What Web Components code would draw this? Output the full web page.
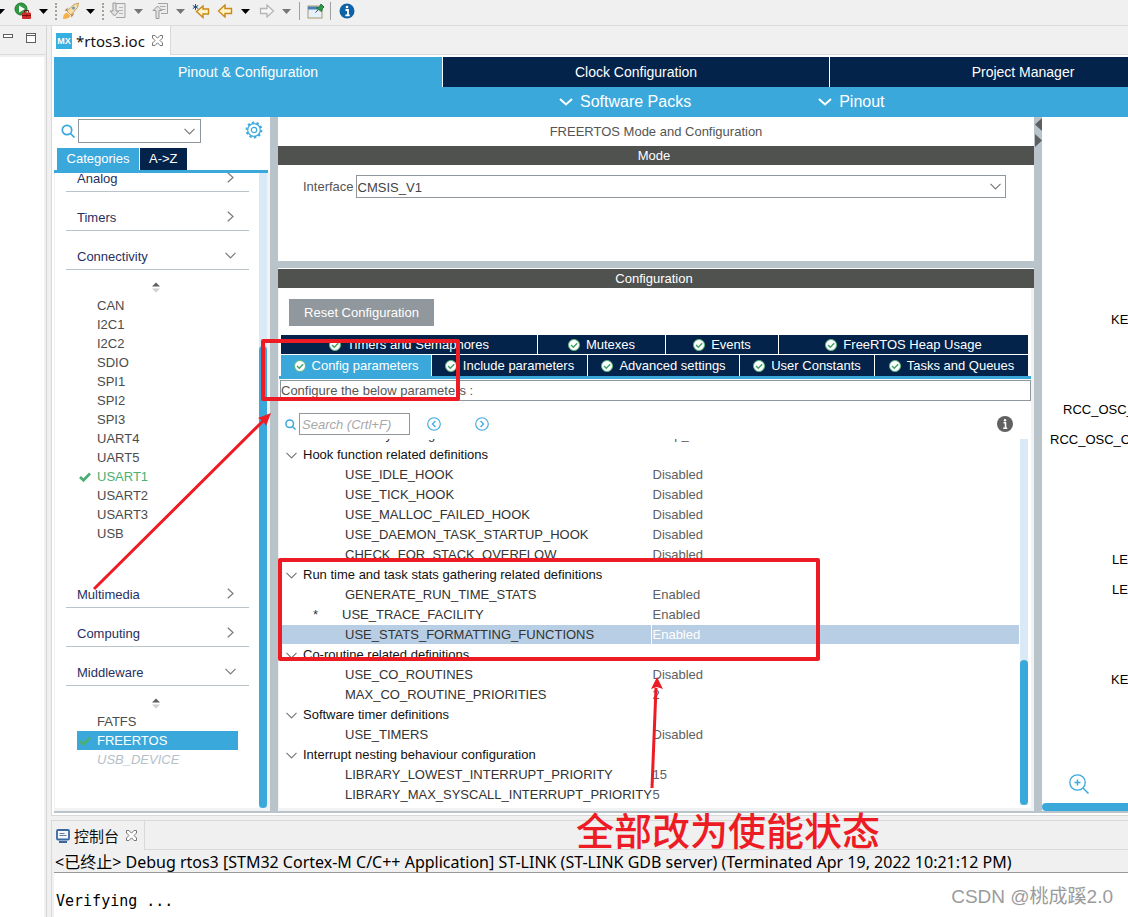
<!DOCTYPE html>
<html lang="zh-CN">
<head>
<meta charset="utf-8">
<title>rtos3.ioc - STM32CubeIDE</title>
<style>
  html, body { margin: 0; height: 100%; }
  body { overflow: hidden; background: #f0f0f0; font: 13px/20px "Liberation Sans", "Noto Sans CJK SC", sans-serif; color: #3c3c3c; }
</style>
</head>
<body>
<ide-shell></ide-shell>

<script>
const define = (name, html) => customElements.define(name, class extends HTMLElement {
  constructor() {
    super();
    this.attachShadow({ mode: 'open' }).innerHTML =
      '<style>*{box-sizing:border-box}:host{display:block;box-sizing:border-box;min-width:0}button,input,select{font:inherit;color:inherit;margin:0;border-radius:0}button{border:0;background:none;padding:0}svg{display:block;flex:none}</style>' +
      (typeof html === 'function' ? html(this) : html);
  }
});

/* ---------- icons ---------- */
const ICONS = {
  run: [18, 18, '<circle cx="7" cy="7" r="6" fill="#2f9a41" stroke="#1c7a33"/><path d="M5 3.5v7l6-3.5z" fill="#fff"/><rect x="8" y="10.500" width="9" height="6.500" rx="1" fill="#d02a2a"/><path d="M10.500 10.500v-2h4v2M8 13.500h9M12.500 12.500v2" stroke="#7c1010" fill="none"/>'],
  rocket: [18, 18, '<path d="M5 9L12 2.500 16.500 1 15.500 5.500 9 13z" fill="#f6dfa6" stroke="#c9a25c"/><path d="M5 9l-2.500-.5L6 5.500zM9 13l.5 2.500L12.500 11z" fill="#b77b45"/><path d="M1 17c0-4 2-6 4-6.500L8.500 14C7.500 16 5 17 1 17z" fill="#f6b04a"/><circle cx="11.500" cy="6" r="1.600" fill="#8299b5"/>'],
  next: [18, 18, '<path d="M6.500 1.500h9.500v14H7" fill="#ececec" stroke="#a3a3a3"/><path d="M10 5.500h4M10 8.500h4M10 11.500h4" stroke="#b5b5b5"/><path d="M4 1h3v8h3l-4.500 5L1 9h3z" fill="#e2e2e2" stroke="#999"/>'],
  prev: [18, 18, '<path d="M6 1.500h9.500v10H9" fill="#ececec" stroke="#a3a3a3"/><path d="M8 4.500h5.500M9 7.500h4.500" stroke="#aaa"/><path d="M4 16.500h3v-8h3L5.500 4 1 8.500h3z" fill="#e2e2e2" stroke="#999"/>'],
  backstar: [18, 16, '<path d="M16.500 6v5h-5.500v3.500L4.500 8.500 11 3v3z" fill="#fff3c4" stroke="#c8891a" stroke-width="1.400"/><path d="M3.500 1v6M.8 2.500l5.400 3M6.200 2.500l-5.400 3" stroke="#24507c"/>'],
  back: [16, 14, '<path d="M14.500 4.500v5H8V13L1.500 7 8 1v3.500z" fill="#fff3c4" stroke="#c8891a" stroke-width="1.400"/>'],
  fwd: [16, 14, '<path d="M1.500 4.500v5H8V13l6.500-6L8 1v3.500z" fill="#f6f6f6" stroke="#b5b5b5" stroke-width="1.300"/>'],
  pin: [18, 16, '<rect x="1" y="3" width="14" height="12" fill="#e4f1fb" stroke="#a89a6c"/><path d="M1 5h10" stroke="#4a7fb5" stroke-width="3"/><path d="M8.500 9.500l3-3" stroke="#444"/><path d="M9.500 5l3-1 1.500-3 3 3-1.500 1.500-1 3z" fill="#2f9a4b" stroke="#1d7436"/>'],
  info: [16, 16, '<circle cx="8" cy="8" r="7.500" fill="#0f62a5"/><path d="M6.500 7H9v5M6.300 12.300h4.400" stroke="#fff" stroke-width="1.800" fill="none"/><circle cx="8" cy="4" r="1.300" fill="#fff"/>'],
  caret: [9, 5, '<path d="M0 0h9L4.500 5z" fill="currentColor"/>'],
  close: [11, 11, '<path d="M.5.5h2.500l2.500 2.700L8 .5h2.500V3L8 5.500 10.500 8v2.500H8L5.500 7.800 3 10.500H.5V8L3 5.500.5 3z" fill="#fff" stroke="#777"/>'],
  minimize: [10, 4, '<rect x=".5" y=".5" width="9" height="3" fill="#fff" stroke="#5f5f5f"/>'],
  maximize: [10, 10, '<rect x=".5" y=".5" width="9" height="9" fill="#fff" stroke="#5f5f5f"/><path d="M0 2.500h10" stroke="#5f5f5f"/>'],
  search: [14, 14, '<circle cx="6" cy="6" r="4.700" fill="none" stroke="#3ba8dc" stroke-width="1.700"/><path d="M9.500 9.500l4 4" stroke="#3ba8dc" stroke-width="1.700"/>'],
  searchsm: [11, 11, '<circle cx="4.700" cy="4.700" r="3.800" fill="none" stroke="#3ba8dc" stroke-width="1.500"/><path d="M7.500 7.500l3 3" stroke="#3ba8dc" stroke-width="1.500"/>'],
  gear: [18, 18, '<circle cx="9" cy="9" r="7.400" fill="none" stroke="#3ba8dc" stroke-width="2" stroke-dasharray="2.325 2.325"/><circle cx="9" cy="9" r="6.300" fill="#fff" stroke="#3ba8dc" stroke-width="1.200"/><circle cx="9" cy="9" r="2.700" fill="none" stroke="#3ba8dc" stroke-width="1.200"/>'],
  down: [11, 7, '<path d="M.5 .8l5 5 5-5" fill="none" stroke="currentColor" stroke-width="1.200"/>'],
  downbold: [14, 8, '<path d="M1 1l6 5.500L13 1" fill="none" stroke="#fff" stroke-width="2"/>'],
  right: [7, 11, '<path d="M.8 .8l5.200 4.700L.8 10.200" fill="none" stroke="currentColor" stroke-width="1.200"/>'],
  sort: [8, 11, '<path d="M0 4.500L4 .5l4 4z" fill="#5f5f5f"/><path d="M0 6.500h8l-4 4z" fill="#cfcfcf"/>'],
  check: [12, 10, '<path d="M1 5l3.500 3.300L11 1.500" fill="none" stroke="#4caf72" stroke-width="2.700"/>'],
  ok: [12, 12, '<circle cx="6" cy="6" r="5.500" fill="#fff" stroke="#5cb77f"/><path d="M3 6l2.300 2.300L9.200 4.300" fill="none" stroke="#3da163" stroke-width="1.400"/>'],
  circleleft: [14, 14, '<circle cx="7" cy="7" r="6.300" fill="none" stroke="#3ba8dc" stroke-width="1.100"/><path d="M8.500 4L5.500 7l3 3" fill="none" stroke="#3ba8dc" stroke-width="1.300"/>'],
  circleright: [14, 14, '<circle cx="7" cy="7" r="6.300" fill="none" stroke="#3ba8dc" stroke-width="1.100"/><path d="M5.500 4l3 3-3 3" fill="none" stroke="#3ba8dc" stroke-width="1.300"/>'],
  help: [16, 16, '<circle cx="8" cy="8" r="8" fill="#616161"/><path d="M6.500 6.800h2V12M6.200 12.300h4" stroke="#fff" stroke-width="1.600" fill="none"/><circle cx="8" cy="4.200" r="1.200" fill="#fff"/>'],
  console: [14, 14, '<rect x="1" y="1" width="12" height="9.500" rx="1" fill="#f4f8fd" stroke="#3c679f" stroke-width="1.800"/><path d="M3.500 4.500h5M3.500 6.500h7" stroke="#657da8"/><path d="M3 13h8" stroke="#3c679f" stroke-width="2"/>'],
  zoomin: [20, 20, '<circle cx="8.500" cy="8.500" r="7.700" fill="none" stroke="#3ba8dc" stroke-width="1.300"/><path d="M14 14l5.500 5.500M5.500 8.500h6M8.500 5.500v6" stroke="#3ba8dc" stroke-width="1.500"/>'],
  collapse: [7, 30, '<path d="M7 1v13L0 7.500z" fill="#5d5f60"/><path d="M0 17v13l7-6.500z" fill="#5d5f60"/>'],
};
const icon = n => { const [w, h, d] = ICONS[n]; return `<svg width="${w}" height="${h}" viewBox="0 0 ${w} ${h}" aria-hidden="true">${d}</svg>`; };

/* ---------- workbench toolbar ---------- */
define('ide-toolbar', () => {
  const b = (n, l, x) => `<button style="margin-left:${x}px" aria-label="${l}">${icon(n)}</button>`;
  const c = (x, off) => `<button class="${off ? 'off' : ''}" style="margin-left:${x}px" aria-label="More">${icon('caret')}</button>`;
  return `<style>
    :host { display: flex; align-items: center; height: 26px; padding-bottom: 3px; overflow: hidden; border-bottom: 1px solid #dcdcdc; color: #000; }
    .off { color: #767676; }
    .dots { width: 0; height: 17px; border-left: 2px dotted #a5a295; }
    .bar { width: 1px; height: 18px; background: #a0a0a0; }
  </style>
  ${c(-4)}${b('run', 'Run', 9)}${c(7)}<i class="dots" style="margin-left:7px"></i>${b('rocket', 'Build', 5)}${c(6)}
  <i class="dots" style="margin-left:7px"></i>${b('next', 'Next annotation', 5)}${c(7, 1)}${b('prev', 'Previous annotation', 9)}${c(6, 1)}
  ${b('backstar', 'Last edit', 7)}${b('back', 'Back', 7)}${c(8)}${b('fwd', 'Forward', 9)}${c(7, 1)}
  <i class="bar" style="margin-left:8px"></i>${b('pin', 'Pin editor', 7)}<i class="bar" style="margin-left:5px"></i>${b('info', 'Information', 8)}`;
});

/* ---------- minimised view column ---------- */
define('ide-side-view', `<style>
    :host { display: flex; flex-direction: column; border-right: 1px solid #d6d6d6; }
    header { display: flex; align-items: center; gap: 13px; height: 29px; padding: 0 0 4px 3px; border-bottom: 1px solid #dcdcdc; }
    header button:first-child { padding-bottom: 5px; }
    .body { flex: 1; margin: 2px 2px 0 0; background: #fff; }
  </style><header><button aria-label="Minimize">${icon('minimize')}</button><button aria-label="Maximize">${icon('maximize')}</button></header><div class="body"></div>`);

/* ---------- tab strip shared by editor and console ---------- */
define('ide-tab-strip', `<style>
    :host { display: flex; flex: none; height: 29px; background: #f0f0f0; border-bottom: 1px solid #d9d9d9; }
    .tab { display: flex; align-items: center; gap: 4px; height: 29px; padding: 0 7px 0 4px; border-right: 1px solid #d9d9d9; background: var(--tab, #f0f0f0); color: #111; font-family: "Noto Sans", "Noto Sans CJK SC", sans-serif; font-size: 15px; }
    button { margin-left: 3px; }
  </style><div class="tab"><slot name="icon"></slot><slot></slot><button aria-label="Close">${icon('close')}</button></div>`);

/* ---------- CubeMX header ---------- */
define('mx-header', `<style>
    :host { overflow: hidden; background: #3ba8dc; color: #fff; }
    nav { display: flex; gap: 1px; background: linear-gradient(90deg, #3ba8dc 388px, #fff 388px); height: 30px; }
    nav button { flex: 1 0 386px; font-size: 14px; background: #03234b; }
    nav button.on { flex-basis: 388px; background: #3ba8dc; }
    .menus { display: flex; gap: 127px; height: 30px; padding-left: 505px; font-size: 16px; }
    .menus button { display: flex; align-items: center; gap: 7px; white-space: nowrap; }
  </style><nav><button class="on">Pinout &amp; Configuration</button><button>Clock Configuration</button><button>Project Manager</button></nav>
  <div class="menus"><button>${icon('downbold')}Software Packs</button><button>${icon('downbold')}Pinout</button></div>`);

/* ---------- scroll bar ---------- */
define('mx-scrollbar', `<style>
    :host { width: 8px; background: #d9e9f5; display: flex; flex-direction: column; }
    i { flex: 1; margin-top: var(--start); border-radius: 4px; background: #3ba8dc; }
  </style><i></i>`);

/* ---------- category tree ---------- */
define('mx-category', el => `<style>
    h3 { margin: 0 10px 0 11px; height: 39px; padding: 14px 12px 0 11px; border-bottom: 1px solid #b9c4ca; font: inherit; color: #27305f; display: flex; justify-content: space-between; line-height: 24px; }
    h3 span { display: flex; width: 13px; justify-content: center; height: 20px; align-items: center; color: #7a7a7a; }
    .list { padding-bottom: var(--end, 26px); }
    .sort { height: 26px; display: flex; justify-content: center; padding: 12px 2px 0 0; }
    ::slotted(*) { margin: 0 21px 0 22px; }
  </style><h3>${el.getAttribute('label')}<span>${icon(el.hasAttribute('open') ? 'down' : 'right')}</span></h3>
  ${el.hasAttribute('open') ? `<div class="list"><div class="sort">${icon('sort')}</div><slot></slot></div>` : ''}`);

define('mx-peripheral', el => `<style>
    :host { display: flex; align-items: center; height: 19px; padding-left: 2px; color: #4b4b4b; }
    :host([enabled]) { color: #4caf72; }
    :host([selected]) { background: #3ba8dc; color: #fff; }
    :host([unavailable]) { color: #b5c1c9; font-style: italic; }
    span { width: 18px; }
  </style><span>${el.hasAttribute('checked') ? icon('check') : ''}</span><slot></slot>`);

define('mx-categories', () => {
  const p = 'CAN,I2C1,I2C2,SDIO,SPI1,SPI2,SPI3,UART4,UART5,USART1,USART2,USART3,USB'.split(',')
    .map(n => `<mx-peripheral ${n === 'USART1' ? 'enabled checked' : ''}>${n}</mx-peripheral>`).join('');
  return `<style>
    :host { display: flex; flex-direction: column; background: #fff; min-height: 0; }
    .find { display: flex; align-items: center; padding: 2px 7px 5px; height: 31px; }
    .find > svg:first-child { margin-right: 3px; }
    .find > button { margin-left: auto; padding-bottom: 2px; }
    .combo { display: flex; width: 123px; height: 24px; border: 1px solid #8f979c; align-items: center; color: #7a7a7a; }
    input { width: 105px; height: 20px; border: 0; outline: 0; padding: 0 4px; }
    .tabs { display: flex; gap: 1px; padding-left: 3px; border-bottom: 3px solid #3ba8dc; margin-right: 2px; }
    .tabs button { height: 22px; padding: 0 9px; background: #03234b; color: #fff; }
    .tabs .on { background: #3ba8dc; width: 82px; }
    .tree { flex: 1; display: flex; min-height: 0; border: solid #f0f2f3; border-width: 0 3px 3px 1px; }
    .scroll { flex: 1; display: flex; flex-direction: column; justify-content: flex-end; overflow: hidden; min-height: 0; }
    mx-category { flex: none; }
    mx-scrollbar { --start: 173px; }
    mx-category:last-child { --end: 39px; }
  </style>
  <div class="find">${icon('search')}<div class="combo"><input aria-label="Search peripherals">${icon('down')}</div><button aria-label="Settings">${icon('gear')}</button></div>
  <div class="tabs"><button class="on">Categories</button><button>A-&gt;Z</button></div>
  <div class="tree"><div class="scroll">
    <mx-category label="Analog"></mx-category><mx-category label="Timers"></mx-category>
    <mx-category label="Connectivity" open>${p}</mx-category>
    <mx-category label="Multimedia"></mx-category><mx-category label="Computing"></mx-category>
    <mx-category label="Middleware" open><mx-peripheral>FATFS</mx-peripheral><mx-peripheral checked selected>FREERTOS</mx-peripheral><mx-peripheral unavailable>USB_DEVICE</mx-peripheral></mx-category>
  </div><mx-scrollbar></mx-scrollbar></div>`;
});

/* ---------- FreeRTOS parameter table ---------- */
define('mx-parameters', () => {
  const rows = [
    ['Memory Management scheme', 'heap_4'],
    ['Hook function related definitions'],
    ['USE_IDLE_HOOK', 'Disabled'], ['USE_TICK_HOOK', 'Disabled'], ['USE_MALLOC_FAILED_HOOK', 'Disabled'],
    ['USE_DAEMON_TASK_STARTUP_HOOK', 'Disabled'], ['CHECK_FOR_STACK_OVERFLOW', 'Disabled'],
    ['Run time and task stats gathering related definitions'],
    ['GENERATE_RUN_TIME_STATS', 'Enabled'], ['USE_TRACE_FACILITY', 'Enabled', 'changed'], ['USE_STATS_FORMATTING_FUNCTIONS', 'Enabled', 'selected'],
    ['Co-routine related definitions'],
    ['USE_CO_ROUTINES', 'Disabled'], ['MAX_CO_ROUTINE_PRIORITIES', '2'],
    ['Software timer definitions'],
    ['USE_TIMERS', 'Disabled'],
    ['Interrupt nesting behaviour configuration'],
    ['LIBRARY_LOWEST_INTERRUPT_PRIORITY', '15'], ['LIBRARY_MAX_SYSCALL_INTERRUPT_PRIORITY', '5'],
  ];
  return `<style>
    :host { display: flex; min-height: 0; }
    .scroll { flex: 1; display: flex; flex-direction: column; justify-content: flex-end; overflow: hidden; }
    table { width: 100%; border-collapse: separate; border-spacing: 0; table-layout: fixed; flex: none; }
    col:first-child { width: 50%; }
    td, th { padding: 0; line-height: 20px; font-weight: 400; text-align: left; white-space: nowrap; height: 20px; }
    td:first-child { padding-left: 63px; color: #333; }
    td + td { padding-left: 2px; color: #606060; }
    th { color: #111; }
    th span { display: flex; align-items: center; gap: 6px; padding-left: 4px; }
    th svg { color: #7a7a7a; }
    .changed td:first-child { padding-left: 31px; }
    .changed b { font-weight: 400; display: inline-block; width: 29px; }
    .selected td { background: #b8cee5; border-bottom: 1px solid #fff; line-height: 19px; }
    .selected td + td { color: #fff; border-left: 1px solid #fff; padding-left: 1px; }
  </style><div class="scroll"><table><colgroup><col><col></colgroup><tbody>${rows.map(([n, v, k]) => v === undefined
    ? `<tr><th colspan="2" scope="rowgroup"><span>${icon('down')}${n}</span></th></tr>`
    : `<tr class="${k || ''}"><td>${k === 'changed' ? '<b>*</b>' : ''}${n}</td><td>${v}</td></tr>`).join('')}</tbody></table></div>`;
});

/* ---------- mode and configuration pane ---------- */
define('mx-config', () => {
  const t = (n, g, on) => `<button class="${on || ''}" style="flex:${g} 0 0">${icon('ok')}${n}</button>`;
  return `<style>
    :host { display: flex; flex-direction: column; min-height: 0; background: #fff; }
    h1 { margin: 0; height: 29px; font: inherit; line-height: 29px; text-align: center; color: #555; }
    h2 { margin: 0; height: 19px; background: #50524f; color: #fff; font: inherit; line-height: 19px; text-align: center; padding-right: 4px; }
    .mode { height: 96px; padding: 10px 28px 0 25px; display: flex; align-items: flex-start; gap: 2px; line-height: 23px; color: #555; }
    .pick { flex: 1; display: flex; position: relative; color: #7a7a7a; }
    .pick svg { position: absolute; right: 5px; top: 8px; }
    select { flex: 1; appearance: none; height: 23px; border: 1px solid #8f979c; background: #fff; padding: 0 1px; color: #444; }
    .split { height: 8px; background: #b9c4ca; border-bottom: 1px solid #fff; }
    .conf { flex: 1; display: flex; flex-direction: column; min-height: 0; padding-bottom: 3px; border: solid #f0f2f3; border-width: 0 3px 3px 1px; }
    .reset { align-self: flex-start; width: 145px; height: 27px; margin: 11px 0 9px 10px; background: #90979d; color: #fff; }
    .tabs { display: flex; gap: 1px; margin: 0 3px 1px 2px; height: 19px; }
    .tabs + .tabs { height: 21px; margin-bottom: 0; }
    .tabs button { display: flex; align-items: center; justify-content: center; gap: 6px; background: #03234b; color: #fff; white-space: nowrap; }
    .tabs .on { background: #3ba8dc; }
    .rule { height: 3px; background: #3ba8dc; margin-bottom: 1px; }
    .note { height: 21px; margin: 0 0 0 1px; border: 1px solid #8f979c; line-height: 19px; color: #555; }
    .find { display: flex; align-items: center; padding: 12px 18px 4px 6px; height: 38px; gap: 3px; }
    .find input { width: 111px; height: 22px; border: 1px solid #8f979c; padding: 0 2px; font-style: italic; outline: 0; }
    .find input::placeholder { color: #a8a8a8; opacity: 1; }
    .find button { margin-left: 14px; }
    .find button + button { margin-left: 31px; }
    .find button:last-child { margin-left: auto; }
    .params { flex: 1; display: flex; min-height: 0; padding: 0 3px 0 3px; gap: 1px; }
    mx-parameters { flex: 1; }
    mx-scrollbar { --start: 221px; }
  </style>
  <h1>FREERTOS Mode and Configuration</h1><h2>Mode</h2>
  <div class="mode"><label for="iface">Interface</label><div class="pick"><select id="iface"><option>CMSIS_V1</option></select>${icon('down')}</div></div>
  <div class="split"></div><h2>Configuration</h2>
  <div class="conf"><button class="reset">Reset Configuration</button>
    <div class="tabs">${t('Timers and Semaphores', 256)}${t('Mutexes', 127)}${t('Events', 112)}${t('FreeRTOS Heap Usage', 249)}</div>
    <div class="tabs">${t('Config parameters', 150, 'on')}${t('Include parameters', 155)}${t('Advanced settings', 151)}${t('User Constants', 134)}${t('Tasks and Queues', 153)}</div>
    <div class="rule"></div><div class="note">Configure the below parameters :</div>
    <div class="find">${icon('searchsm')}<input aria-label="Search parameters" placeholder="Search (Crtl+F)"><button aria-label="Previous match">${icon('circleleft')}</button><button aria-label="Next match">${icon('circleright')}</button><button aria-label="Help">${icon('help')}</button></div>
    <div class="params"><mx-parameters></mx-parameters><mx-scrollbar></mx-scrollbar></div>
  </div>`;
});

/* ---------- pinout canvas: labels sit at free positions on the drawing ---------- */
define('mx-pinout', () => {
  const l = (t, x, y) => `<span style="left:${x}px;top:${y}px">${t}</span>`;
  return `<style>
    :host { position: relative; overflow: hidden; background: #fff; color: #000; display: flex; flex-direction: column; justify-content: flex-end; }
    span { position: absolute; white-space: nowrap; }
    .zoom { align-self: flex-start; margin: 0 0 9px 27px; }
    .bar { height: 8px; background: #3ba8dc; border-radius: 4px 0 0 4px; }
  </style>${l('KE', 69, 193)}${l('RCC_OSC_', 21, 283)}${l('RCC_OSC_O', 8, 313)}${l('LE', 70, 433)}${l('LE', 70, 463)}${l('KE', 69, 553)}
  <button class="zoom" aria-label="Zoom in">${icon('zoomin')}</button><div class="bar"></div>`;
});

/* ---------- console ---------- */
define('ide-console', `<style>
    :host { flex: none; border: solid #d9d9d9; border-width: 1px 0 0 1px; margin-top: 4px; color: #000; font-family: "Noto Sans", "Noto Sans CJK SC", sans-serif; font-size: 16px; }
    .status { padding-left: 1px; margin-left: 2px; height: 23px; line-height: 24px; white-space: nowrap; overflow: hidden; border-bottom: 1px solid #999; }
    pre { margin: 0 0 0 2px; background: #fff; height: 44px; padding: 18px 0 0 2px; line-height: 20px; font-family: "DejaVu Sans Mono", monospace; font-size: 15px; }
  </style><ide-tab-strip><span slot="icon">${icon('console')}</span>控制台</ide-tab-strip>
  <div class="status">&lt;已终止&gt; Debug rtos3 [STM32 Cortex-M C/C++ Application] ST-LINK (ST-LINK GDB server) (Terminated Apr 19, 2022 10:21:12 PM)</div>
  <pre>Verifying ...</pre>`);

/* ---------- red markup drawn over the window ---------- */
define('mark-overlay', `<style>
    :host { position: absolute; inset: 0; pointer-events: none; }
    svg { position: absolute; inset: 0; width: 100%; height: 100%; }
    .note { position: absolute; left: 576px; top: 805px; font: 500 38px/48px "Noto Sans CJK SC", sans-serif; color: #ed1c24; white-space: nowrap; }
    .mark { position: absolute; right: 15px; bottom: 6px; font: 19px/28px "Liberation Sans", "Noto Sans CJK SC", sans-serif; color: #9b9b9b; }
  </style><svg><g fill="none" stroke="#ed1c24" stroke-width="4" stroke-linejoin="round"><rect x="263" y="341" width="195" height="58"/><rect x="280" y="560" width="538" height="99"/><path d="M94 589L264 420M652 788l4-100" stroke-width="3"/></g>
  <path d="M271 413l-5 13-3-5-5-3zM657 677l6 12-6-2-6 2z" fill="#ed1c24"/></svg><div class="note">全部改为使能状态</div><div class="mark">CSDN @桃成蹊2.0</div>`);

/* ---------- application shell ---------- */
define('ide-shell', `<style>
    :host { position: relative; display: grid; grid-template: auto minmax(0, 1fr) / 47px minmax(0, 1fr); height: 100vh; overflow: hidden; }
    ide-toolbar { grid-column: 1 / 3; }
    .main { display: flex; flex-direction: column; margin-left: 4px; min-width: 0; min-height: 0; }
    .editor { flex: 1; min-height: 0; display: flex; flex-direction: column; border: solid #d9d9d9; border-width: 0 0 1px 1px; background: #fff; }
    .editor > ide-tab-strip { --tab: #fff; }
    mx-header { margin: 2px 0 0 2px; flex: none; }
    .work { flex: 1; min-height: 0; display: grid; grid-template: minmax(0, 1fr) / 216px 8px minmax(0, 1fr) 8px 86px; margin: 0 0 2px 2px; border-bottom: 2px solid #b9c4ca; }
    .bar { background: #b9c4ca; padding: 0 0 0 1px; }
    .mx { display: block; width: 16px; height: 16px; background: #35b0e0; color: #fff; font: bold 9px/16px "Liberation Sans", sans-serif; text-align: center; }
  </style>
  <ide-toolbar></ide-toolbar><ide-side-view></ide-side-view>
  <div class="main"><div class="editor"><ide-tab-strip><span slot="icon" class="mx">MX</span>*rtos3.ioc</ide-tab-strip><mx-header></mx-header>
    <div class="work"><mx-categories></mx-categories><div class="bar"></div><mx-config></mx-config><div class="bar">${icon('collapse')}</div><mx-pinout></mx-pinout></div></div>
    <ide-console></ide-console></div>
  <mark-overlay></mark-overlay>`);
</script>
</body>
</html>
